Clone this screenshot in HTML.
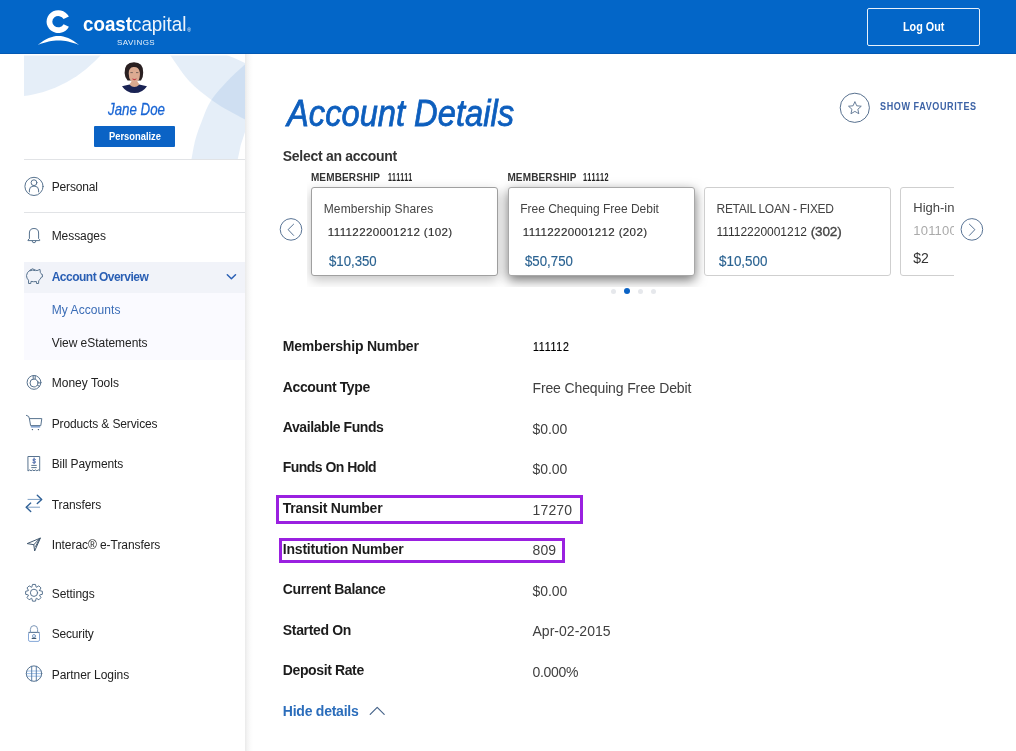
<!DOCTYPE html>
<html lang="en">
<head>
<meta charset="utf-8">
<title>Account Details - Coast Capital Savings</title>
<style>
*{box-sizing:border-box;margin:0;padding:0}
html,body{width:1016px;height:751px;overflow:hidden;background:#fff}
body{position:relative;font-family:"Liberation Sans",sans-serif;color:#222}
.t{position:absolute;white-space:pre;line-height:1;font-weight:400}
.abs{position:absolute}
#txt{position:absolute;left:0;top:0;width:1016px;height:751px;will-change:transform}
#hdr{left:0;top:0;width:1016px;height:54px;background:#0366c8;border-bottom:1px solid #0359b4}
#logout{left:867px;top:8px;width:113px;height:38px;border:1px solid #e8f1fb;border-radius:2px}
#side{left:24px;top:54px;width:221px;height:697px;background:#fff}
#sideshadow{left:245px;top:54px;width:8px;height:697px;background:linear-gradient(90deg,#eaeaea 0,#f4f4f4 30%,#fbfbfb 65%,#fff 100%)}
#prof{left:24px;top:54px;width:221px;height:105px;overflow:hidden;background:#fff}
#pbtn{left:94px;top:126px;width:81px;height:21px;background:#0b63c5;border-radius:1px}
.hr{height:1px;background:#e1e3e6;left:24px;width:221px}
#navact{left:24px;top:262px;width:221px;height:31px;background:#f1f3f9}
#navsub{left:24px;top:293px;width:221px;height:67px;background:#fafaff}
#car{left:307px;top:167px;width:646.5px;height:120px;overflow:hidden;will-change:transform}
.card{position:absolute;top:20px;width:187px;height:89px;background:#fff;border:1px solid #cfcfcf;border-radius:3px}
#c1{left:4px;border-color:#a0a0a0;box-shadow:0 4px 12px rgba(0,0,0,.24)}
#c2{left:200.5px;border-color:#a8a8a8;box-shadow:0 4px 12px rgba(0,0,0,.55)}
#c3{left:397px}
#c4{left:593px}
.dot{position:absolute;top:288.5px;width:5px;height:5px;border-radius:50%;background:#e6e8ec}
.pbox{position:absolute;border:3px solid #9a20e0}
svg{position:absolute;overflow:visible}
.ic{fill:none;stroke:#58738f;stroke-width:1;stroke-linecap:round;stroke-linejoin:round}
</style>
</head>
<body>
<div id="hdr" class="abs"></div>
<div id="logout" class="abs"></div>

<!-- logo mark -->
<svg style="left:0;top:0" width="200" height="54" viewBox="0 0 200 54">
  <path d="M68.9 16.6 A11.8 11.4 0 1 0 68.9 26.8 L63.6 24.3 A6 5.6 0 1 1 63.6 19.1 Z" fill="#fff"/>
  <path d="M37.7 44.9 C46 38.6 52 36 58.4 36 C65 36 71 38.6 79 44.9 C71 41.6 65 40.4 58.4 40.4 C52 40.4 46 41.6 37.7 44.9 Z" fill="#fff"/>
</svg>

<div id="side" class="abs"></div>
<div id="sideshadow" class="abs"></div>
<div id="prof" class="abs">
  <svg style="left:0;top:0" width="221" height="105" viewBox="24 54 221 105">
    <g fill="#6496d7" fill-opacity=".165">
      <circle cx="7.9" cy="-26.6" r="123.7"/>
      <path d="M169.4 54.0 C172.8 58.6 182.5 73.9 189.5 81.5 C196.5 89.1 204.6 94.8 211.2 99.7 C217.8 104.6 223.3 107.5 228.9 110.8 C234.5 114.1 242.3 118.0 245.0 119.4 L245 63 Q234 57.5 224 54 Z"/>
      <path d="M245.0 64.4 C242.3 66.9 234.5 73.5 228.9 79.5 C223.3 85.5 215.6 93.5 211.2 100.2 C206.8 106.9 204.9 113.2 202.3 119.7 C199.7 126.2 197.2 132.8 195.4 139.4 C193.6 146.0 192.2 155.7 191.5 159.0 L237.8 159 Q240 145 245 132 Z"/>
    </g>
    <rect x="24" y="54" width="221" height="1.500" fill="#fff"/>
  </svg>
</div>
<!-- avatar -->
<svg style="left:119px;top:60px" width="30" height="36" viewBox="119 60 30 36">
  <path d="M122 86.200 Q124.500 85.600 129.600 84.600 L139.200 84.600 Q144 85.600 147 86.200 Q142.500 93 134.500 93 Q126.500 93 122 86.200 Z" fill="#1a2354"/>
  <path d="M129.300 84.500 Q134.400 89.600 139.500 84.500 L137.600 82 L131.200 82 Z" fill="#d9a98f"/>
  <path d="M124.600 73 Q124.200 62.400 134 62.300 Q143.400 62.400 143.200 72.400 Q143.300 77.500 141 80.600 L127.600 80.600 Q124.700 77.500 124.600 73 Z" fill="#2a2021"/>
  <path d="M128.700 73.400 Q128.600 67.600 133.400 67 Q138.800 66.600 139.900 72.400 Q140.300 78.400 137.600 81.600 Q134.400 84.400 131.200 81.600 Q128.600 78.400 128.700 73.400 Z" fill="#dcab92"/>
  <path d="M131.800 78.600 Q134.400 79.400 137 78.600 Q134.400 81.800 131.800 78.600 Z" fill="#c23a44"/>
  <path d="M130.400 72.600 L132.800 72.600 M136 72.600 L138.400 72.600" stroke="#6b5a55" stroke-width=".9" fill="none"/>
</svg>
<div id="pbtn" class="abs"></div>
<div class="hr abs" style="top:159px"></div>
<div class="hr abs" style="top:212px"></div>
<div id="navact" class="abs"></div>
<div id="navsub" class="abs"></div>

<!-- nav icons -->
<svg style="left:0;top:0" width="260" height="751" viewBox="0 0 260 751">
  <g class="ic">
    <!-- personal -->
    <circle cx="34" cy="186.400" r="9.100"/>
    <circle cx="34" cy="182.700" r="2.900"/>
    <path d="M29.400 191.900 L29.400 190 Q29.500 186.500 33 186.200 L35 186.200 Q38.500 186.500 38.600 190 L38.600 191.900"/>
    <!-- bell -->
    <path d="M28.300 240.600 L39.700 240.600 L39.700 239.700 L38.600 238.700 L38.600 233 Q38.600 228.500 34 228.500 Q29.400 228.500 29.400 233 L29.400 238.700 L28.300 239.700 Z"/>
    <path d="M32.100 240.800 Q32.100 242.800 34 242.800 Q35.900 242.800 35.900 240.800"/>
    <!-- piggy -->
    <path d="M30 270.200 Q32.400 267.300 35.200 270 L37 270.600 L40 269.400 L40.300 272.400 Q41.200 273.300 41.400 274.300 L42.400 274.500 L42.400 277 L41.200 277.300 Q40.600 279.400 38.700 280.600 L38.600 283.500 L36.500 283.500 L36.400 281.500 Q33.600 282 31 281.400 L30.800 283.500 L28.600 283.500 L28.500 280.200 Q26.500 278.400 26.500 275.600 Q26.600 272.200 30 270.200 Z"/>
    <path d="M30.400 270.600 Q32.600 269.500 35 270.500"/>
    <!-- money tools -->
    <circle cx="34" cy="382.400" r="6.900"/>
    <circle cx="34" cy="383" r="4"/>
    <path d="M33.200 375.600 L33.200 379 M35.200 375.700 L35.200 379.200 M37.600 381.400 L40.600 383.800 M37.400 385.200 L39.600 386.400"/>
    <!-- cart -->
    <path d="M26.400 415.400 L28.600 416.400 L29.400 418.600 L41.800 418.600 L40.800 425.600 L30.600 425.600 L29.400 418.600"/>
    <path d="M31.200 426.900 L39.800 426.900" stroke="#3f6fb5"/>
    <circle cx="32.400" cy="429.600" r=".7" fill="#3c5068" stroke="none"/>
    <circle cx="38.400" cy="429.600" r=".7" fill="#3c5068" stroke="none"/>
    <!-- bill -->
    <path d="M28.300 456.500 L39.700 456.500 L39.700 470.800 L38.300 469.900 L36.900 470.800 L35.400 469.900 L34 470.800 L32.600 469.900 L31.100 470.800 L29.700 469.900 L28.300 470.800 Z"/>
    <path d="M31.700 465.400 L36.300 465.400 M31.700 467.600 L36.300 467.600"/>
    <path d="M35.500 459.500 Q34.200 458.600 33 459.400 Q32.200 460.500 34.200 460.900 Q36.100 461.400 35.400 462.600 Q34.200 463.400 32.700 462.500 M34.100 458 L34.100 463.700" stroke="#4565a8" stroke-width=".9"/>
    <!-- interac plane -->
    <path d="M40 538.200 L27.200 543.600 L33.800 544.700 L34.600 550.600 Z M40 538.200 L33.800 544.700 M40 538.200 L35.600 546.400" stroke="#41586f"/>
    <!-- gear -->
    <circle cx="34" cy="592.800" r="3.600"/>
    <path d="M39.59 590.61 L42.37 591.31 L42.37 594.29 L39.59 594.99 L39.50 595.20 L40.97 597.66 L38.86 599.77 L36.40 598.30 L36.19 598.39 L35.49 601.17 L32.51 601.17 L31.81 598.39 L31.60 598.30 L29.14 599.77 L27.03 597.66 L28.50 595.20 L28.41 594.99 L25.63 594.29 L25.63 591.31 L28.41 590.61 L28.50 590.40 L27.03 587.94 L29.14 585.83 L31.60 587.30 L31.81 587.21 L32.51 584.43 L35.49 584.43 L36.19 587.21 L36.40 587.30 L38.86 585.83 L40.97 587.94 L39.50 590.40 Z"/>
    <!-- lock -->
    <rect x="28.500" y="632.400" width="11" height="9" rx="1.500" stroke="#86a8d8"/>
    <path d="M28.800 632.400 L39.200 632.400" stroke="#5f7791"/>
    <path d="M30.400 632.400 L30.400 629.400 Q30.400 625.600 34 625.600 Q37.600 625.600 37.600 629.400 L37.600 632.400" stroke="#7d97b8"/>
    <circle cx="34" cy="636" r="1.500" stroke="#7f9fc8"/>
    <path d="M32.200 638.400 L35.800 638.400" stroke="#3f5870" stroke-width="1.100"/>
    <!-- globe -->
    <path d="M26.800 671 L41.200 671 M26.200 673.600 L41.800 673.600 M26.800 676.200 L41.200 676.200" stroke="#9dc0ea"/>
    <circle cx="34" cy="673.600" r="7.700"/>
    <path d="M31.700 666.300 L31.700 680.900 M36.300 666.300 L36.300 680.900" stroke="#5a7fa8"/>
  </g>
  <!-- transfers -->
  <g class="ic">
    <path d="M28 499.400 L41.400 499.400 M26.400 507.200 L39.600 507.200" stroke="#7d9fc4"/>
    <path d="M37.300 495.300 L41.700 499.400 L37.300 503.500 M30.700 503.100 L26.200 507.200 L30.700 511.400" stroke="#2f6096" stroke-width="1.400"/>
  </g>
  <!-- chevron down -->
  <path d="M227.300 274.800 L231.400 278.700 L235.500 274.800" fill="none" stroke="#2a5fb4" stroke-width="1.500" stroke-linecap="round" stroke-linejoin="round"/>
</svg>

<!-- main: favourites -->
<svg style="left:830px;top:85px" width="50" height="46" viewBox="830 85 50 46">
  <circle cx="854.800" cy="107.800" r="14.600" fill="#fff" stroke="#58718f" stroke-width="1"/>
  <path d="M854.90 101.60 L856.72 105.79 L861.27 106.23 L857.85 109.26 L858.84 113.72 L854.90 111.40 L850.96 113.72 L851.95 109.26 L848.53 106.23 L853.08 105.79 Z" fill="none" stroke="#58718f" stroke-width=".9" stroke-linejoin="round"/>
</svg>

<!-- carousel -->
<div id="car" class="abs">
  <div id="c1" class="card"></div>
  <div id="c2" class="card"></div>
  <div id="c3" class="card"></div>
  <div id="c4" class="card"></div>
  <span class="t" style="left:606.3px;top:34.2px;font-size:13px;color:#444">High-int</span>
  <span class="t" style="left:606.3px;top:56.8px;font-size:13px;color:#aaa;letter-spacing:.2px">101100</span>
  <span class="t" style="left:606.3px;top:83.5px;font-size:14px;color:#333">$2</span>
</div>
<svg style="left:270px;top:210px" width="720" height="40" viewBox="270 210 720 40">
  <circle cx="291" cy="229.400" r="10.800" fill="#fff" stroke="#587394" stroke-width="1"/>
  <path d="M293.600 224.200 L288.100 229.600 L293.600 235.400" fill="none" stroke="#587394" stroke-width="1" stroke-linecap="round" stroke-linejoin="round"/>
  <circle cx="971.900" cy="229.400" r="10.800" fill="#fff" stroke="#587394" stroke-width="1"/>
  <path d="M969.400 224.200 L974.900 229.600 L969.400 235.400" fill="none" stroke="#587394" stroke-width="1" stroke-linecap="round" stroke-linejoin="round"/>
</svg>
<div class="dot" style="left:610.500px"></div>
<div class="dot" style="left:623.900px;top:288px;width:6px;height:6px;background:#0b63c5"></div>
<div class="dot" style="left:637.500px"></div>
<div class="dot" style="left:651.300px"></div>

<!-- highlight boxes -->
<div class="pbox" style="left:276px;top:495px;width:307px;height:29px"></div>
<div class="pbox" style="left:279px;top:538px;width:286px;height:25px"></div>

<!-- hide-details chevron -->
<svg style="left:365px;top:700px" width="30" height="20" viewBox="365 700 30 20">
  <path d="M370.200 714.400 L377.200 707.400 L384.200 714.400" fill="none" stroke="#47648a" stroke-width="1.2" stroke-linecap="round" stroke-linejoin="round"/>
</svg>

<div id="txt">
<span class="t" style="left:902.7px;top:20.7px;font-size:12.5px;font-weight:700;color:#fff;transform:scaleX(0.8642);transform-origin:0 0;">Log Out</span>
<span class="t" style="left:83.2px;top:14.1px;font-size:20.5px;color:#fff;transform:scaleX(0.9156);transform-origin:0 0;"><b>coast</b><span style="opacity:.93">capital</span></span>
<span class="t" style="left:187.3px;top:28.0px;font-size:5px;color:#fff;">®</span>
<span class="t" style="left:117.0px;top:38.7px;font-size:8px;color:rgba(255,255,255,.9);letter-spacing:0.45px;">SAVINGS</span>
<span class="t" style="left:107.6px;top:101.1px;font-size:17px;color:#1764d4;transform:scaleX(0.7832);transform-origin:0 0;font-style:italic;-webkit-text-stroke:.3px #1764d4;">Jane Doe</span>
<span class="t" style="left:109.0px;top:131.3px;font-size:10.5px;font-weight:700;color:#fff;transform:scaleX(0.8908);transform-origin:0 0;">Personalize</span>
<span class="t" style="left:51.7px;top:181.0px;font-size:12px;color:#222;letter-spacing:-0.15px;">Personal</span>
<span class="t" style="left:51.7px;top:229.9px;font-size:12px;color:#222;letter-spacing:-0.06px;">Messages</span>
<span class="t" style="left:51.7px;top:270.6px;font-size:12px;font-weight:700;color:#2a5fb4;letter-spacing:-0.51px;">Account Overview</span>
<span class="t" style="left:51.7px;top:303.9px;font-size:12px;color:#3a6cb6;letter-spacing:0.08px;">My Accounts</span>
<span class="t" style="left:51.7px;top:336.9px;font-size:12px;color:#222;letter-spacing:-0.04px;">View eStatements</span>
<span class="t" style="left:51.7px;top:377.1px;font-size:12px;color:#222;letter-spacing:0.01px;">Money Tools</span>
<span class="t" style="left:51.7px;top:417.8px;font-size:12px;color:#222;letter-spacing:-0.12px;">Products &amp; Services</span>
<span class="t" style="left:51.7px;top:457.9px;font-size:12px;color:#222;letter-spacing:-0.09px;">Bill Payments</span>
<span class="t" style="left:51.7px;top:498.9px;font-size:12px;color:#222;letter-spacing:-0.08px;">Transfers</span>
<span class="t" style="left:51.7px;top:539.1px;font-size:12px;color:#222;letter-spacing:-0.06px;">Interac® e-Transfers</span>
<span class="t" style="left:51.7px;top:587.7px;font-size:12px;color:#222;letter-spacing:-0.05px;">Settings</span>
<span class="t" style="left:51.7px;top:627.8px;font-size:12px;color:#222;letter-spacing:-0.17px;">Security</span>
<span class="t" style="left:51.7px;top:669.1px;font-size:12px;color:#222;letter-spacing:-0.04px;">Partner Logins</span>
<span class="t" style="left:287.0px;top:95.1px;font-size:37.5px;color:#0d5ebd;transform:scaleX(0.8712);transform-origin:0 0;font-style:italic;-webkit-text-stroke:.8px #0d5ebd;">Account Details</span>
<span class="t" style="left:879.7px;top:101.4px;font-size:10.5px;font-weight:700;color:#3d63a6;transform:scaleX(0.8603);transform-origin:0 0;letter-spacing:.7px;">SHOW FAVOURITES</span>
<span class="t" style="left:282.8px;top:149.0px;font-size:14px;font-weight:700;color:#333;letter-spacing:-0.29px;">Select an account</span>
<span class="t" style="left:310.9px;top:172.6px;font-size:10px;font-weight:700;color:#333;letter-spacing:0.14px;">MEMBERSHIP</span>
<span class="t" style="left:387.5px;top:172.6px;font-size:10px;font-weight:700;color:#222;transform:scaleX(0.7001);transform-origin:0 0;letter-spacing:.8px;">111111</span>
<span class="t" style="left:507.4px;top:172.6px;font-size:10px;font-weight:700;color:#333;letter-spacing:0.14px;">MEMBERSHIP</span>
<span class="t" style="left:582.6px;top:172.6px;font-size:10px;font-weight:700;color:#222;transform:scaleX(0.7284);transform-origin:0 0;letter-spacing:.8px;">111112</span>
<span class="t" style="left:323.7px;top:203.0px;font-size:12px;color:#444;letter-spacing:0.14px;">Membership Shares</span>
<span class="t" style="left:327.8px;top:226.3px;font-size:11.6px;color:#2e2e2e;letter-spacing:0.34px;-webkit-text-stroke:.15px #2e2e2e;">11112220001212 (102)</span>
<span class="t" style="left:328.5px;top:254.0px;font-size:14.4px;color:#2a6291;transform:scaleX(0.9168);transform-origin:0 0;-webkit-text-stroke:.15px #2a6291;">$10,350</span>
<span class="t" style="left:520.2px;top:203.0px;font-size:12px;color:#444;">Free Chequing Free Debit</span>
<span class="t" style="left:522.8px;top:226.3px;font-size:11.6px;color:#2e2e2e;letter-spacing:0.33px;-webkit-text-stroke:.15px #2e2e2e;">11112220001212 (202)</span>
<span class="t" style="left:524.5px;top:254.0px;font-size:14.4px;color:#2a6291;transform:scaleX(0.9206);transform-origin:0 0;-webkit-text-stroke:.15px #2a6291;">$50,750</span>
<span class="t" style="left:716.5px;top:203.0px;font-size:12px;color:#444;letter-spacing:-0.29px;">RETAIL LOAN - FIXED</span>
<span class="t" style="left:716.5px;top:225.4px;font-size:12px;color:#333;letter-spacing:-0.02px;">11112220001212<span style="font-size:13.5px;color:#444;-webkit-text-stroke:.35px #444;letter-spacing:-.1px"> (302)</span></span>
<span class="t" style="left:719.0px;top:254.0px;font-size:14.4px;color:#2a6291;transform:scaleX(0.9302);transform-origin:0 0;-webkit-text-stroke:.15px #2a6291;">$10,500</span>
<span class="t" style="left:282.8px;top:338.6px;font-size:14px;font-weight:700;color:#1c1c1c;letter-spacing:-0.2px;">Membership Number</span>
<span class="t" style="left:282.8px;top:379.5px;font-size:14px;font-weight:700;color:#1c1c1c;letter-spacing:-0.37px;">Account Type</span>
<span class="t" style="left:282.8px;top:419.7px;font-size:14px;font-weight:700;color:#1c1c1c;letter-spacing:-0.41px;">Available Funds</span>
<span class="t" style="left:282.8px;top:460.4px;font-size:14px;font-weight:700;color:#1c1c1c;letter-spacing:-0.54px;">Funds On Hold</span>
<span class="t" style="left:282.8px;top:500.9px;font-size:14px;font-weight:700;color:#1c1c1c;letter-spacing:-0.22px;">Transit Number</span>
<span class="t" style="left:282.8px;top:542.1px;font-size:14px;font-weight:700;color:#1c1c1c;letter-spacing:-0.21px;">Institution Number</span>
<span class="t" style="left:282.8px;top:581.7px;font-size:14px;font-weight:700;color:#1c1c1c;letter-spacing:-0.36px;">Current Balance</span>
<span class="t" style="left:282.8px;top:622.6px;font-size:14px;font-weight:700;color:#1c1c1c;letter-spacing:-0.33px;">Started On</span>
<span class="t" style="left:282.8px;top:662.8px;font-size:14px;font-weight:700;color:#1c1c1c;letter-spacing:-0.38px;">Deposit Rate</span>
<span class="t" style="left:282.8px;top:703.8px;font-size:14px;font-weight:700;color:#2b6dbb;letter-spacing:-0.24px;">Hide details</span>
<span class="t" style="left:533.3px;top:340.6px;font-size:12.5px;color:#000;transform:scaleX(0.8432);transform-origin:0 0;letter-spacing:.9px;-webkit-text-stroke:.2px #000;">111112</span>
<span class="t" style="left:532.5px;top:381.1px;font-size:14px;color:#404040;letter-spacing:-0.13px;">Free Chequing Free Debit</span>
<span class="t" style="left:532.5px;top:421.7px;font-size:14px;color:#404040;letter-spacing:-0.06px;">$0.00</span>
<span class="t" style="left:532.5px;top:461.9px;font-size:14px;color:#404040;letter-spacing:-0.06px;">$0.00</span>
<span class="t" style="left:532.5px;top:502.6px;font-size:14px;color:#404040;letter-spacing:0.17px;">17270</span>
<span class="t" style="left:532.5px;top:543.1px;font-size:14px;color:#404040;letter-spacing:0.12px;">809</span>
<span class="t" style="left:532.5px;top:583.9px;font-size:14px;color:#404040;letter-spacing:-0.06px;">$0.00</span>
<span class="t" style="left:532.5px;top:624.1px;font-size:14px;color:#404040;letter-spacing:0.02px;">Apr-02-2015</span>
<span class="t" style="left:532.5px;top:664.9px;font-size:14px;color:#404040;letter-spacing:-0.3px;">0.000%</span>
</div>
</body>
</html>
